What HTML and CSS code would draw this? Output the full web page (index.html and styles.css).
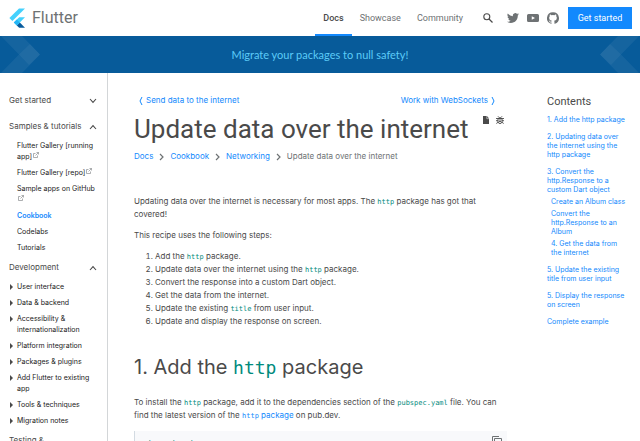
FILE: index.html
```html
<!DOCTYPE html>
<html lang="en">
<head>
<meta charset="utf-8">
<meta name="viewport" content="width=device-width, initial-scale=1">
<title>Update data over the internet | Flutter</title>
<link rel="stylesheet" href="styles.css">
</head>
<body>
<svg class="defs" aria-hidden="true">
  <symbol id="down" viewBox="0 0 8 6"><path d="M1 1l3 3.4L7 1" fill="none" stroke="currentColor" stroke-width="1.1"/></symbol>
  <symbol id="up" viewBox="0 0 8 6"><path d="M1 5l3-3.4L7 5" fill="none" stroke="currentColor" stroke-width="1.1"/></symbol>
  <symbol id="right" viewBox="0 0 5 8"><path d="M1 1l3 3-3 3" fill="none" stroke="currentColor" stroke-width="1.2"/></symbol>
  <symbol id="left-angle" viewBox="0 0 4 8"><path d="M3 0L1 4l2 4" fill="none" stroke="currentColor"/></symbol>
  <symbol id="right-angle" viewBox="0 0 4 8"><path d="M1 0l2 4-2 4" fill="none" stroke="currentColor"/></symbol>
  <symbol id="external" viewBox="0 0 6 6"><path d="M2.5 1.5h-2v4h4v-2M3.5.5h2v2M5.5.5L2.5 3.5" fill="none" stroke="currentColor" stroke-width=".7"/></symbol>
  <symbol id="caret" viewBox="0 0 3 6"><path d="M0 0l3 3-3 3z" fill="currentColor"/></symbol>
</svg>

<header class="top">
  <a class="brand" href="#">
    <svg class="brand-mark" viewBox="0 0 16 20" aria-hidden="true">
      <path d="M10 .5h6L3.4 13 .4 10z" fill="#44d1fd"/>
      <path d="M10.2 9.300H16L10.800 14.500 7.800 17.400 4.800 14.500z" fill="#44d1fd"/>
      <path d="M7.800 17.400l3-2.900L16 19.700h-5.800z" fill="#075b9d"/>
      <path d="M4.800 14.500l3-2.900 3 2.900-3 2.900z" fill="#24b5f5"/>
    </svg>
    <span>Flutter</span>
  </a>
  <nav class="menu" aria-label="Main">
    <a class="current" href="#">Docs</a>
    <a href="#">Showcase</a>
    <a href="#">Community</a>
  </nav>
  <button class="search" type="button" aria-label="Search">
    <svg viewBox="0 0 10 10"><circle cx="3.800" cy="3.800" r="3" fill="none" stroke="currentColor" stroke-width="1.100"/><path d="M6 6l3.500 3.500" stroke="currentColor" stroke-width="1.200"/></svg>
  </button>
  <div class="social">
    <a href="#" aria-label="Twitter"><svg viewBox="0 0 24 24"><path fill="currentColor" d="M23.950 4.570a10 10 0 0 1-2.820.770 4.960 4.960 0 0 0 2.160-2.720c-.950.550-2 .960-3.130 1.180a4.920 4.920 0 0 0-8.380 4.480A13.930 13.930 0 0 1 1.640 3.160a4.920 4.920 0 0 0 1.520 6.570 4.900 4.900 0 0 1-2.230-.610v.060a4.920 4.920 0 0 0 3.950 4.830 5 5 0 0 1-2.210.080 4.940 4.940 0 0 0 4.600 3.420A9.870 9.870 0 0 1 0 19.540a13.990 13.990 0 0 0 7.550 2.210c9.050 0 14-7.500 14-13.980l-.020-.640a9.940 9.940 0 0 0 2.420-2.560z"/></svg></a>
    <a href="#" aria-label="YouTube"><svg viewBox="0 0 24 24"><path fill="currentColor" fill-rule="evenodd" d="M3 4h18q3 0 3 3v10q0 3-3 3H3q-3 0-3-3V7q0-3 3-3zm6.500 4.500v7l6.500-3.500z"/></svg></a>
    <a href="#" aria-label="GitHub"><svg viewBox="0 0 24 24"><path fill="currentColor" d="M12 .300a12 12 0 0 0-3.800 23.380c.600.120.830-.260.830-.570L9 21.070c-3.340.720-4.040-1.610-4.040-1.610-.550-1.390-1.340-1.760-1.340-1.760-1.080-.740.090-.730.090-.730 1.200.090 1.840 1.240 1.840 1.240 1.070 1.830 2.800 1.300 3.490 1 .100-.780.420-1.310.760-1.610-2.670-.300-5.470-1.330-5.470-5.930 0-1.310.470-2.380 1.240-3.220-.140-.300-.540-1.520.100-3.180 0 0 1-.320 3.300 1.230a11.500 11.500 0 0 1 6 0c2.280-1.550 3.290-1.230 3.290-1.230.640 1.660.240 2.880.120 3.180a4.650 4.650 0 0 1 1.230 3.220c0 4.610-2.810 5.630-5.480 5.920.420.360.810 1.100.810 2.220l-.010 3.290c0 .310.200.690.820.570A12 12 0 0 0 12 .300"/></svg></a>
  </div>
  <a class="cta" href="#">Get started</a>
</header>

<div class="banner">
  <svg class="banner-art" viewBox="0 0 40 37" aria-hidden="true"><path d="M1 0h21l18 18.500L22 37H1l18-18.500z" fill="#fff" opacity=".06"/><path d="M19 18.500L30 8l10 10.500L29 29z" fill="#fff" opacity=".05"/></svg>
  <a href="#">Migrate your packages to null safety!</a>
  <svg class="banner-art flipped" viewBox="0 0 40 37" aria-hidden="true"><path d="M1 0h21l18 18.500L22 37H1l18-18.500z" fill="#fff" opacity=".06"/><path d="M19 18.500L30 8l10 10.500L29 29z" fill="#fff" opacity=".05"/></svg>
</div>

<div class="page">
  <nav class="side" aria-label="Documentation">
    <button class="group" type="button">Get started<svg><use href="#down"/></svg></button>
    <button class="group" type="button">Samples &amp; tutorials<svg><use href="#up"/></svg></button>
    <ul>
      <li><a href="#">Flutter Gallery [running app]<svg class="ext"><use href="#external"/></svg></a></li>
      <li><a href="#">Flutter Gallery [repo]<svg class="ext"><use href="#external"/></svg></a></li>
      <li><a href="#">Sample apps on GitHub <svg class="ext"><use href="#external"/></svg></a></li>
      <li><a class="active" href="#">Cookbook</a></li>
      <li><a href="#">Codelabs</a></li>
      <li><a href="#">Tutorials</a></li>
    </ul>
    <button class="group" type="button">Development<svg><use href="#up"/></svg></button>
    <ul class="tree">
      <li><svg class="caret"><use href="#caret"/></svg><a href="#">User interface</a></li>
      <li><svg class="caret"><use href="#caret"/></svg><a href="#">Data &amp; backend</a></li>
      <li><svg class="caret"><use href="#caret"/></svg><a href="#">Accessibility &amp; internationalization</a></li>
      <li><svg class="caret"><use href="#caret"/></svg><a href="#">Platform integration</a></li>
      <li><svg class="caret"><use href="#caret"/></svg><a href="#">Packages &amp; plugins</a></li>
      <li><svg class="caret"><use href="#caret"/></svg><a href="#">Add Flutter to existing app</a></li>
      <li><svg class="caret"><use href="#caret"/></svg><a href="#">Tools &amp; techniques</a></li>
      <li><svg class="caret"><use href="#caret"/></svg><a href="#">Migration notes</a></li>
    </ul>
    <button class="group" type="button">Testing &amp;</button>
  </nav>

  <main>
    <nav class="pager" aria-label="Recipes">
      <a href="#"><svg><use href="#left-angle"/></svg>Send data to the internet</a>
      <a href="#">Work with WebSockets<svg><use href="#right-angle"/></svg></a>
    </nav>
    <div class="title">
      <h1>Update data over the internet</h1>
      <div class="tools">
        <a href="#" aria-label="View source"><svg viewBox="0 0 8 8"><path d="M1 0h4l2 2.500V8H1z" fill="currentColor"/><path d="M4.800 0v2.700H7" fill="none" stroke="#fff" stroke-width=".5"/></svg></a>
        <a href="#" aria-label="Report an issue"><svg viewBox="0 0 8 8"><path d="M2 2.500h4v3.500q-.500 1.500-2 1.500T2 6z" fill="none" stroke="currentColor"/><path d="M2 .300l1.200 1.400h1.600L6 .300M0 2.500h8M0 4.700h2M6 4.700h2M.300 7.500L2 6.300M7.700 7.500L6 6.300M3 4h2M3 5.500h2" fill="none" stroke="currentColor" stroke-width=".9"/></svg></a>
      </div>
    </div>
    <nav class="crumbs" aria-label="Breadcrumb">
      <a href="#">Docs</a><svg><use href="#right"/></svg>
      <a href="#">Cookbook</a><svg><use href="#right"/></svg>
      <a href="#">Networking</a><svg><use href="#right"/></svg>
      <span>Update data over the internet</span>
    </nav>
    <p>Updating data over the internet is necessary for most apps. The <code>http</code> package has got that covered!</p>
    <p>This recipe uses the following steps:</p>
    <ol>
      <li>Add the <code>http</code> package.</li>
      <li>Update data over the internet using the <code>http</code> package.</li>
      <li>Convert the response into a custom Dart object.</li>
      <li>Get the data from the internet.</li>
      <li>Update the existing <code>title</code> from user input.</li>
      <li>Update and display the response on screen.</li>
    </ol>
    <h2>1. Add the <code>http</code> package</h2>
    <p>To install the <code>http</code> package, add it to the dependencies section of the <code>pubspec.yaml</code> file. You can find the latest version of the <a href="#"><code>http</code> package</a> on pub.dev.</p>
    <div class="snippet">
      <pre><code>dependencies:</code></pre>
      <button type="button" aria-label="Copy"><svg viewBox="0 0 10 11"><path d="M.500 8V.500H7M2.500 2.500h7v8h-7z" fill="none" stroke="currentColor"/></svg></button>
    </div>
  </main>

  <aside class="toc">
    <h3>Contents</h3>
    <ul>
      <li><a href="#">1. Add the http package</a></li>
      <li><a href="#">2. Updating data over the internet using the http package</a></li>
      <li><a href="#">3. Convert the http.Response to a custom Dart object</a>
        <ul>
          <li><a href="#">Create an Album class</a></li>
          <li><a href="#">Convert the http.Response to an Album</a></li>
          <li><a href="#">4. Get the data from the internet</a></li>
        </ul>
      </li>
      <li><a href="#">5. Update the existing title from user input</a></li>
      <li><a href="#">5. Display the response on screen</a></li>
      <li><a href="#">Complete example</a></li>
    </ul>
  </aside>
</div>
</body>
</html>
```
FILE: styles.css
```css
* { box-sizing: border-box; }

body {
  margin: 0;
  height: 100vh;
  overflow: hidden;
  background: #fff;
  color: #4a4a4a;
  font: 8px/13px Inter, Roboto, sans-serif;
}

a { color: #1389fd; text-decoration: none; }
ul, ol { margin: 0; padding: 0; }
ul { list-style: none; }
svg { display: block; flex: none; }
button { border: 0; padding: 0; background: none; color: inherit; font: inherit; text-align: left; }
.defs { display: none; }

/* Header */
.top { display: flex; align-items: center; height: 36px; padding: 0 8px 0 9px; font-family: Roboto, sans-serif; }
.brand { display: flex; align-items: center; gap: 7px; margin-right: auto; color: #6e7274; font-size: 16px; line-height: 20px; }
.brand-mark { width: 16px; height: 20px; }
.menu { display: flex; align-self: stretch; font-size: 9px; }
.menu a { padding: 12px 8px 0; border-bottom: 2px solid transparent; color: #6e7274; }
.menu .current { border-color: #1389fd; color: #4a4a4a; font-weight: 500; }
.search { width: 10px; height: 10px; margin-left: 12px; color: #4a4a4a; }
.social { display: flex; gap: 8px; margin: 0 9px 0 14px; color: #6e7274; }
.social a { color: inherit; }
.social svg { width: 12px; height: 12px; }
.cta { width: 64px; background: #1389fd; color: #fff; font-size: 9px; line-height: 22px; text-align: center; }

/* Announcement */
.banner { display: flex; align-items: center; justify-content: space-between; height: 37px; background: #075b9a; font-family: Lato, sans-serif; font-size: 11px; }
.banner a { color: #5ccbf8; }
.banner-art { width: 40px; height: 37px; }
.flipped { transform: scaleX(-1); }

/* Columns */
.page { display: grid; grid-template-columns: 108px minmax(0, 1fr) 93px; }

/* Sidebar */
.side { padding: 21px 10px 0 9px; border-right: 1px solid #d3d6d8; }
.group { display: flex; align-items: center; justify-content: space-between; width: 100%; margin-bottom: 13px; font-size: 8px; }
.group svg { width: 8px; height: 6px; }
.side ul { display: grid; gap: 5px; margin: -6px 0 8px 8px; font-size: 7px; line-height: 11px; }
.side li { display: flex; }
.side li a { color: #212121; }
.side .active { color: #1389fd; font-weight: 600; }
.ext { display: inline-block; width: 6px; height: 6px; margin-left: 1px; color: #8a8d8f; vertical-align: 1px; }
.side .tree { margin-left: 1px; }
.caret { width: 3px; height: 6px; margin: 3px 4px 0 0; }

/* Article */
main { padding: 21px 40px 0 26px; }
.pager { display: flex; justify-content: space-between; padding: 0 12px 0 5px; }
.pager a { display: flex; align-items: center; gap: 3px; }
.pager svg { width: 4px; height: 8px; }
.title { display: flex; gap: 13px; margin-top: 5px; }
h1 { margin: 0; font-family: Roboto, sans-serif; font-size: 26px; line-height: 34px; font-weight: 400; white-space: nowrap; }
.tools { display: flex; gap: 6px; padding-top: 4px; }
.tools a { color: #4a4a4a; }
.tools svg { width: 8px; height: 8px; }
.crumbs { display: flex; align-items: center; gap: 6px; margin: 4px 0 32px; color: #6e7274; }
.crumbs svg { width: 5px; height: 8px; }
p { margin: 0 0 8px; }
code { color: #008a7c; font-family: "DejaVu Sans Mono", monospace; font-size: 7px; line-height: 1; }
a code { color: inherit; }
ol { padding-left: 21px; }
h2 { margin: 25px 0 15px; font-size: 20px; line-height: 28px; font-weight: 400; }
h2 code { font-size: 18px; }
.snippet { display: flex; justify-content: space-between; align-items: flex-start; margin-top: 9px; padding: 5px 5px 0 11px; border-left: 1px solid #d3dbe2; background: #f8f9fb; }
pre { margin: 2px 0 8px; line-height: 13px; }
pre code { font-size: 8px; line-height: inherit; }
.snippet svg { width: 10px; height: 11px; color: #6e7274; }

/* Table of contents */
.toc { padding: 22px 12px 0 0; font-size: 7px; line-height: 9px; }
.toc h3 { margin: 0 0 6px; font-family: Roboto, sans-serif; font-size: 11px; line-height: 14px; font-weight: 400; }
.toc ul { display: grid; gap: 8px; }
.toc ul ul { gap: 3px; margin: 3px 0 0 4px; }
```
